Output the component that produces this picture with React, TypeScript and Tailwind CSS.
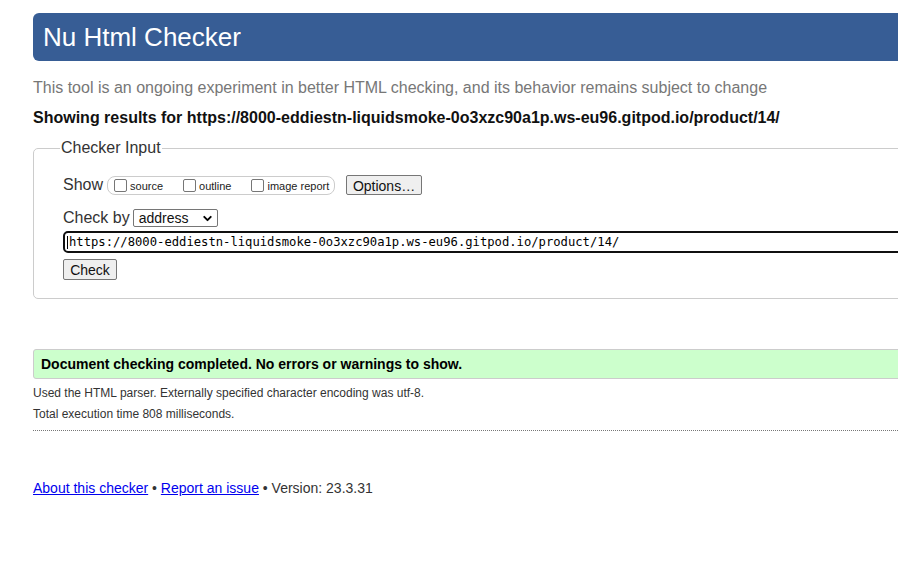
import { ChevronDown } from "lucide-react";

const url =
  "https://8000-eddiestn-liquidsmoke-0o3xzc90a1p.ws-eu96.gitpod.io/product/14/";

function Checkbox({ label }: { label: string }) {
  return (
    <label className="flex items-center">
      <span className="block w-[13px] h-[13px] rounded-[2px] border border-[#767676] bg-white" />
      <span className="ml-[3px] mt-[2px] text-[11px] text-[#222]">{label}</span>
    </label>
  );
}

export default function App() {
  return (
    <div className="w-full overflow-hidden bg-white font-['Liberation_Sans',Arial,sans-serif] text-[#222] min-h-[566px]">
      <div className="w-[1100px] pl-[33px] pt-[13px]">
        {/* Titel */}
        <header className="h-[48px] rounded-[6px] bg-[#375d95] flex items-center pl-[10px]">
          <h1 className="text-[26px] text-white leading-none">Nu Html Checker</h1>
        </header>

        <p className="mt-[17px] text-[16px] leading-[20px] text-[#777]">
          This tool is an ongoing experiment in better HTML checking, and its behavior remains subject to change
        </p>
        <p className="mt-[10px] text-[16px] leading-[20px] font-bold text-[#111]">
          Showing results for {url}
        </p>

        {/* Eingabe */}
        <fieldset className="mt-[11px] border border-[#ccc] rounded-[5px] px-[29px] pb-[16px] pt-[12px] min-w-0">
          <legend className="ml-[-3px] px-[1px] text-[16px] leading-[18px] text-[#333]">
            Checker Input
          </legend>

          <div className="flex items-center h-[22px] mt-[5px]">
            <span className="text-[16px] text-[#333] mr-[4px]">Show</span>
            <div className="flex items-center h-[19px] w-[228px] border border-[#ccc] rounded-[8px] pl-[6px]">
              <Checkbox label="source" />
              <span className="w-[20px]" />
              <Checkbox label="outline" />
              <span className="w-[20px]" />
              <Checkbox label="image report" />
            </div>
            <button className="ml-[11px] h-[20px] w-[76px] text-[14px] bg-[#efefef] border border-[#767676] rounded-[2px] text-[#111]">
              Options…
            </button>
          </div>

          <div className="flex items-center mt-[12px] h-[20px]">
            <span className="text-[16px] text-[#333] mr-[3px]">Check by</span>
            <div className="flex items-center justify-between h-[18px] w-[85px] border border-[#767676] rounded-[2px] pl-[5px] pr-[3px] text-[14px] text-[#111]">
              address
              <ChevronDown size={13} strokeWidth={3.5} className="text-black" />
            </div>
          </div>

          <div className="mt-[3px] h-[22px] border-2 border-[#101010] rounded-[5px] flex items-center pl-[2px] font-['DejaVu_Sans_Mono',monospace] text-[12.2px] text-black">
            <span className="w-px h-[13px] bg-black" />
            <span className="ml-px">{url}</span>
          </div>

          <button className="mt-[6px] h-[21px] w-[54px] text-[14px] bg-[#efefef] border border-[#767676] rounded-[2px] text-[#111]">
            Check
          </button>
        </fieldset>

        {/* Ergebnis */}
        <div className="mt-[50px] h-[30px] border border-[#ccc] rounded-[3px] bg-[#ccffcc] flex items-center pl-[7px]">
          <p className="text-[14px] font-bold text-black">
            Document checking completed. No errors or warnings to show.
          </p>
        </div>
        <p className="mt-[7px] text-[12px] leading-[15px] text-[#333]">
          Used the HTML parser. Externally specified character encoding was utf-8.
        </p>
        <p className="mt-[6px] text-[12px] leading-[15px] text-[#333]">
          Total execution time 808 milliseconds.
        </p>
        <hr className="mt-[8px] border-0 border-t border-dotted border-[#777]" />

        <p className="mt-[47px] text-[14px] text-[#333]">
          <a href="#" className="text-[#0000ee] underline">About this checker</a>
          {" • "}
          <a href="#" className="text-[#0000ee] underline">Report an issue</a>
          {" • Version: 23.3.31"}
        </p>
      </div>
    </div>
  );
}
